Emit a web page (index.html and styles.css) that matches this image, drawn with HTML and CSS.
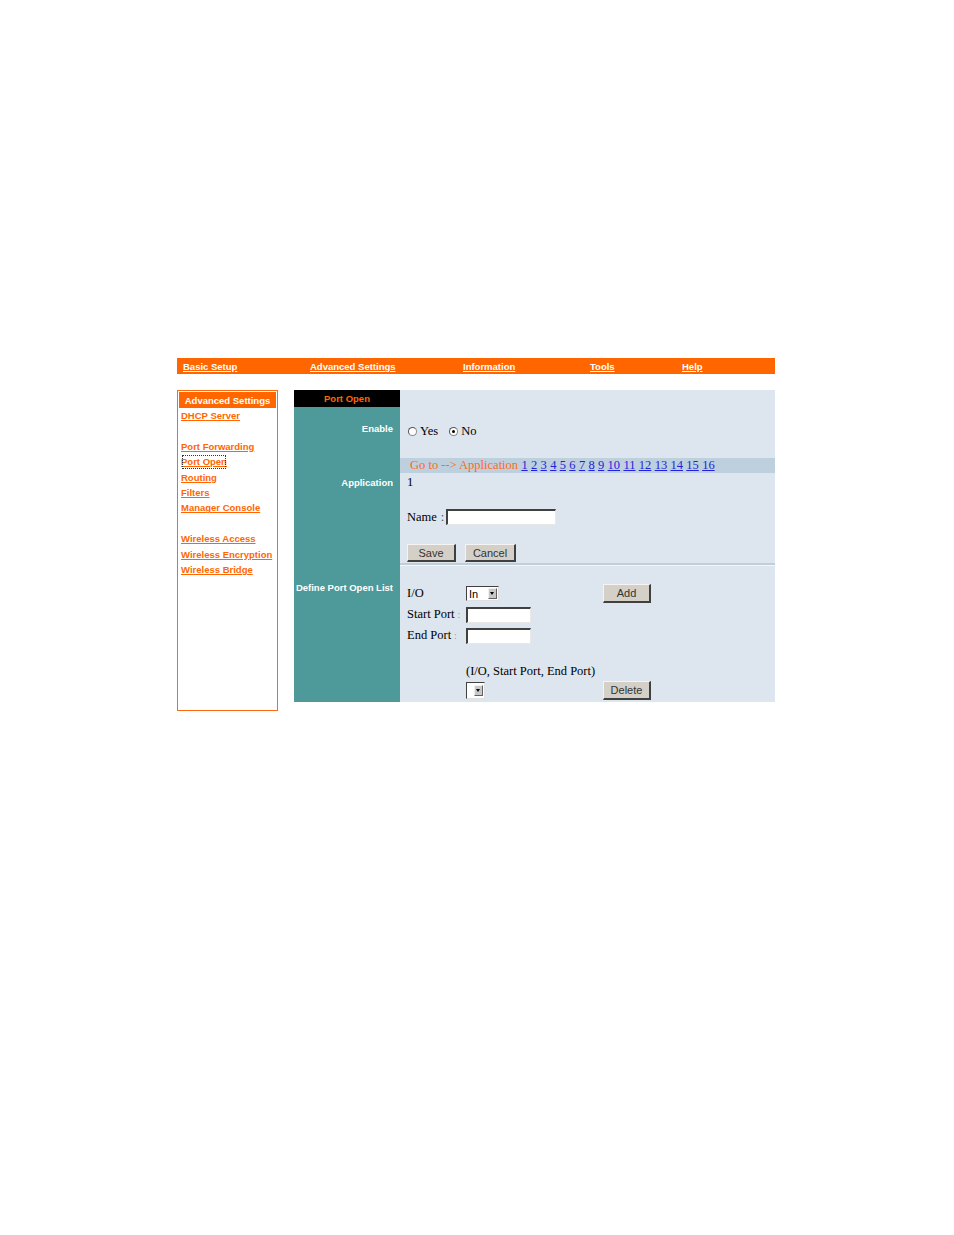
FILE: index.html
```html
<!DOCTYPE html>
<html>
<head>
<meta charset="utf-8">
<title>Port Open</title>
<link rel="stylesheet" href="styles.css">
</head>
<body>
<div class="page">
  <nav class="topnav">
    <a href="#">Basic Setup</a>
    <a href="#">Advanced Settings</a>
    <a href="#">Information</a>
    <a href="#">Tools</a>
    <a href="#">Help</a>
  </nav>
  <div class="layout">
    <aside class="sidebar">
      <div class="side-head">Advanced Settings</div>
      <div class="side-links">
        <a href="#">DHCP Server</a>
        <span class="gap"></span>
        <a href="#">Port Forwarding</a>
        <a href="#" class="current">Port Open</a>
        <a href="#">Routing</a>
        <a href="#">Filters</a>
        <a href="#">Manager Console</a>
        <span class="gap"></span>
        <a href="#">Wireless Access</a>
        <a href="#">Wireless Encryption</a>
        <a href="#">Wireless Bridge</a>
      </div>
    </aside>
    <main class="panel">
      <div class="lbl head">Port Open</div>
      <div class="val"></div>

      <div class="lbl enable">Enable</div>
      <div class="val enable-val">
        <span class="radio"></span><span class="rtext">Yes</span>
        <span class="radio on"></span><span class="rtext">No</span>
      </div>

      <div class="lbl app">Application</div>
      <div class="val app-val">
        <div class="goto"><span class="goto-lbl">Go to --&gt; Application</span>
          <a href="#">1</a> <a href="#">2</a> <a href="#">3</a> <a href="#">4</a> <a href="#">5</a> <a href="#">6</a> <a href="#">7</a> <a href="#">8</a> <a href="#">9</a> <a href="#">10</a> <a href="#">11</a> <a href="#">12</a> <a href="#">13</a> <a href="#">14</a> <a href="#">15</a> <a href="#">16</a>
        </div>
        <div class="app-num">1</div>
        <div class="name-row"><span>Name</span><span class="colon">:</span><span class="input name-input"></span></div>
        <div class="btn-row"><span class="btn save">Save</span><span class="btn cancel">Cancel</span></div>
      </div>

      <div class="lbl define">Define Port Open List</div>
      <div class="val define-val">
        <div class="frow"><span class="flabel">I/O</span><span class="select io"><span class="sel-text">In</span><span class="sel-arrow"></span></span><span class="btn add">Add</span></div>
        <div class="frow"><span class="flabel">Start Port<span class="fcolon">:</span></span><span class="input port"></span></div>
        <div class="frow"><span class="flabel">End Port<span class="fcolon">:</span></span><span class="input port"></span></div>
        <div class="list-cap">(I/O, Start Port, End Port)</div>
        <div class="frow last"><span class="flabel"></span><span class="select small"><span class="sel-arrow"></span></span><span class="btn delete">Delete</span></div>
      </div>
    </main>
  </div>
</div>
</body>
</html>
```
FILE: styles.css
```css
html, body {
  margin: 0;
  padding: 0;
  background: #ffffff;
}
.page {
  padding: 358px 0 0 177px;
  width: 598px;
  font-family: "Liberation Serif", "Times New Roman", serif;
}
.topnav {
  display: grid;
  grid-template-columns: 127px 153px 127px 92px 1fr;
  height: 16px;
  background: #ff6600;
  padding-left: 6px;
  align-items: center;
}
.topnav a {
  color: #ffffff;
  font: bold 9.5px/17px "Liberation Sans", Arial, sans-serif;
  text-decoration: underline;
}
.layout {
  display: flex;
  gap: 16px;
  margin-top: 16px;
  align-items: flex-start;
}
.sidebar {
  width: 99px;
  height: 319px;
  border: 1px solid #ff6a10;
}
.side-head {
  margin: 1px 1px 0 1px;
  height: 16px;
  background: #ff6600;
  color: #ffffff;
  font: bold 9.5px/17px "Liberation Sans", Arial, sans-serif;
  text-align: center;
}
.side-links {
  display: flex;
  flex-direction: column;
  align-items: flex-start;
  padding-left: 3px;
}
.side-links a, .side-links .gap {
  display: block;
  height: 15.4px;
  color: #ff6600;
  font: bold 9.5px/15px "Liberation Sans", Arial, sans-serif;
  text-decoration: underline;
  white-space: nowrap;
}
.side-links a.current {
  outline: 1px dotted #333333;
  outline-offset: -2px;
}
.panel {
  width: 481px;
  display: grid;
  grid-template-columns: 106px 375px;
  grid-template-rows: 17px 51px 108px 136px;
}
.lbl {
  background: #4e9999;
  color: #ffffff;
  font: bold 9.5px/12px "Liberation Sans", Arial, sans-serif;
  text-align: right;
  padding-right: 7px;
}
.lbl.head {
  background: #000000;
  color: #ff6600;
  text-align: center;
  line-height: 18px;
  padding-right: 0;
}
.lbl.enable { padding-top: 16px; }
.lbl.app { padding-top: 19px; }
.lbl.define { padding-top: 16px; white-space: nowrap; }
.val {
  background: #dde5ee;
  font-size: 12.5px;
  color: #000000;
}
.enable-val {
  display: flex;
  align-items: center;
  padding-left: 8px;
  padding-bottom: 3px;
  box-sizing: border-box;
}
.radio {
  width: 7px;
  height: 7px;
  border-radius: 50%;
  border: 1px solid #888888;
  border-top-color: #555555;
  border-left-color: #555555;
  background: #ffffff;
  position: relative;
  margin-right: 3px;
}
.radio.on::after {
  content: "";
  position: absolute;
  left: 2px;
  top: 2px;
  width: 3px;
  height: 3px;
  border-radius: 50%;
  background: #000000;
}
.rtext { margin-right: 11px; }
.app-val {
  display: flex;
  flex-direction: column;
  border-bottom: 1px solid #f2f5f9;
  box-shadow: inset 0 -2px 0 #c3cdd7;
  box-sizing: border-box;
}
.goto {
  height: 15px;
  background: #bed0dd;
  line-height: 15px;
  padding-left: 10px;
  white-space: nowrap;
  word-spacing: 0.2px;
}
.goto-lbl { color: #ff6a1a; margin-right: 0; word-spacing: 0; }
.goto a { color: #2222dd; text-decoration: underline; }
.app-num {
  margin-top: 2px;
  height: 14px;
  line-height: 14px;
  padding-left: 7px;
}
.name-row {
  margin-top: 18px;
  height: 20px;
  display: flex;
  align-items: center;
  padding-left: 7px;
}
.colon { margin: 0 2px 0 4px; color: #555555; }
.input {
  display: inline-block;
  height: 13px;
  background: #ffffff;
  border-top: 2px solid #404040;
  border-left: 2px solid #404040;
  border-right: 1px solid #e8e8e8;
  border-bottom: 1px solid #e8e8e8;
}
.name-input { width: 107px; }
.btn-row {
  margin-top: 17px;
  display: flex;
  gap: 9px;
  padding-left: 7px;
}
.btn {
  display: inline-flex;
  align-items: center;
  justify-content: center;
  height: 18px;
  box-sizing: border-box;
  background: #d4d0c8;
  border-top: 1px solid #f4f4f4;
  border-left: 1px solid #f4f4f4;
  border-right: 2px solid #404040;
  border-bottom: 2px solid #404040;
  color: #333333;
  font: 11px "Liberation Sans", Arial, sans-serif;
}
.save { width: 49px; }
.cancel { width: 51px; }
.define-val {
  padding-top: 17px;
  padding-left: 7px;
  box-sizing: border-box;
}
.frow {
  display: flex;
  align-items: center;
  height: 21px;
}
.flabel {
  width: 59px;
  flex: none;
  white-space: nowrap;
  position: relative;
}
.fcolon {
  color: #9aa3ad;
  margin-left: 3px;
  font-size: 10px;
}
.select {
  display: inline-flex;
  align-items: center;
  justify-content: space-between;
  height: 15px;
  box-sizing: border-box;
  background: #ffffff;
  border-top: 1px solid #404040;
  border-left: 1px solid #404040;
  border-right: 1px solid #e0e0e0;
  border-bottom: 1px solid #e0e0e0;
  padding: 0 1px 0 2px;
}
.io { width: 33px; }
.select.small { width: 19px; height: 17px; justify-content: flex-end; }
.sel-text {
  font: 11px "Liberation Sans", Arial, sans-serif;
}
.sel-arrow {
  width: 9px;
  height: 11px;
  box-sizing: border-box;
  background: #c8c8c8;
  border-top: 1px solid #f0f0f0;
  border-left: 1px solid #f0f0f0;
  border-right: 1px solid #606060;
  border-bottom: 1px solid #606060;
  position: relative;
}
.sel-arrow::after {
  content: "";
  position: absolute;
  left: 1px;
  top: 3px;
  border-left: 2.5px solid transparent;
  border-right: 2.5px solid transparent;
  border-top: 3px solid #000000;
}
.port { width: 62px; }
.add { width: 48px; height: 19px; margin-left: 104px; }
.list-cap {
  margin-top: 18px;
  height: 14px;
  line-height: 14px;
  padding-left: 59px;
}
.frow.last { margin-top: 2px; }
.delete { width: 48px; height: 19px; margin-left: 118px; }
```
